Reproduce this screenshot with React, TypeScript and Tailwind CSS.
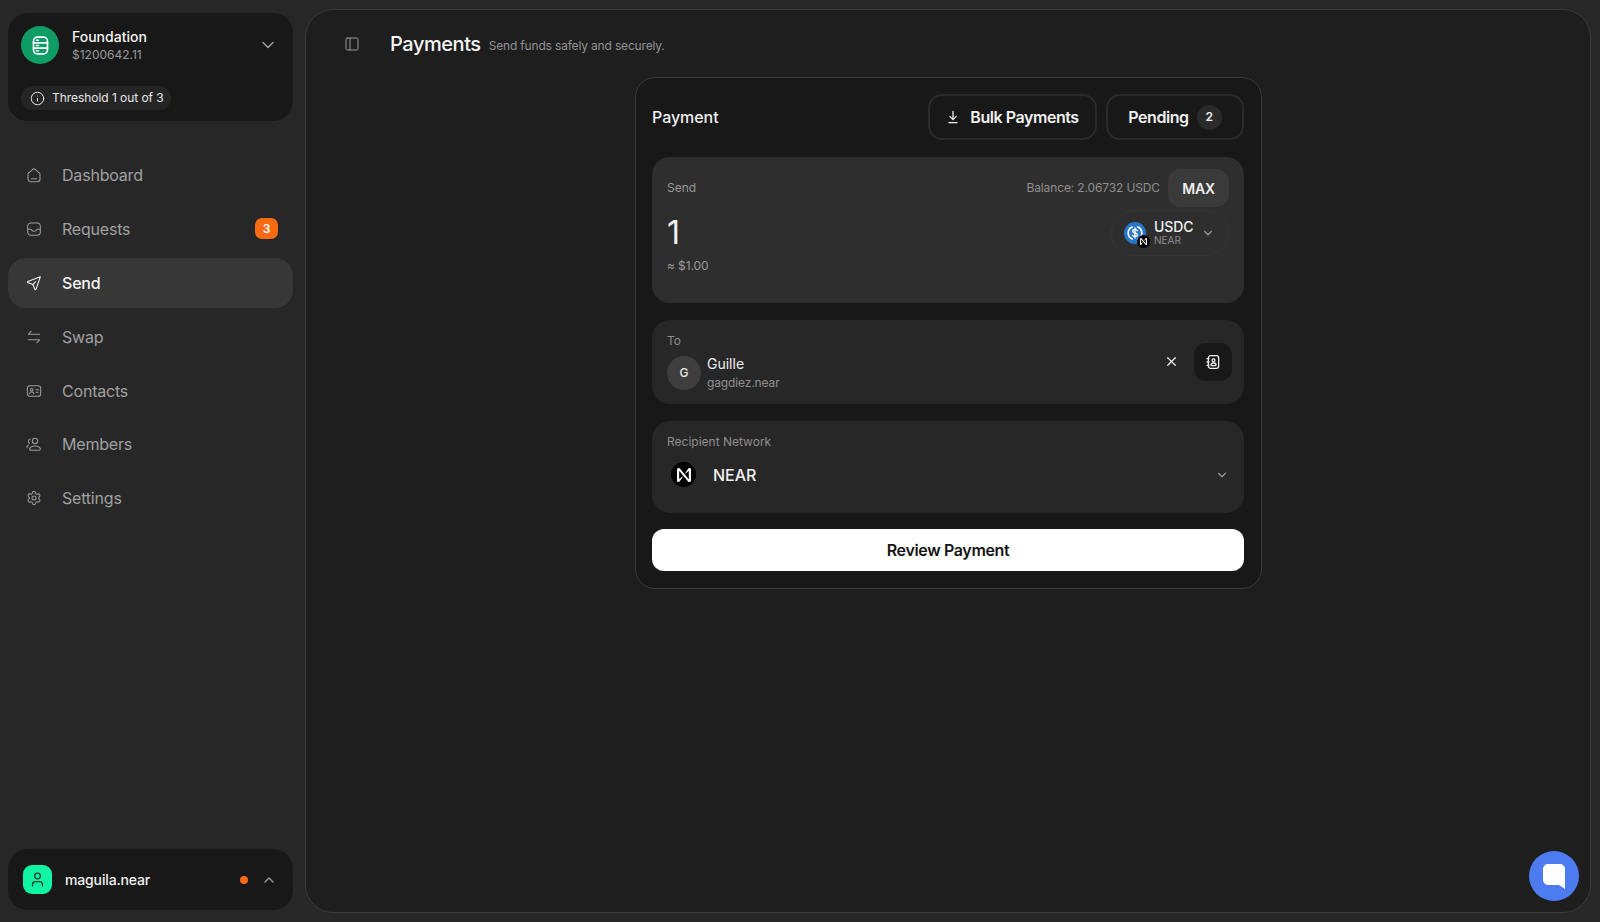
import { ChevronDown, ChevronUp, Info, PanelLeft, Settings, User, X } from "lucide-react";
import type { ReactNode } from "react";

const iconProps = {
  width: 16,
  height: 16,
  viewBox: "0 0 24 24",
  fill: "none",
  stroke: "currentColor",
  strokeWidth: 1.6,
  strokeLinecap: "round" as const,
  strokeLinejoin: "round" as const,
};

function HomeIcon() {
  return (
    <svg {...iconProps}>
      <path d="M3 11.2c0-1 .4-1.9 1.2-2.5l5.6-4.9a3.3 3.3 0 0 1 4.4 0l5.6 4.9c.8.6 1.2 1.5 1.2 2.5V18a4 4 0 0 1-4 4H7a4 4 0 0 1-4-4z" />
      <path d="M8 17.5h8" />
    </svg>
  );
}

function InboxIcon() {
  return (
    <svg {...iconProps}>
      <rect x="2.5" y="3" width="19" height="18.5" rx="5" />
      <path d="M2.5 12.5h4.2c.8 0 1.4.5 1.8 1.2.6 1.1 1.9 1.8 3.5 1.8s2.9-.7 3.5-1.8c.4-.7 1-1.2 1.8-1.2h4.2" />
    </svg>
  );
}

function SendIcon() {
  return (
    <svg {...iconProps}>
      <path d="M21.5 2.8 2.6 9.6c-.7.3-.7 1.2 0 1.5l7.7 3.2 3.2 7.4c.3.7 1.2.6 1.5-.1z" />
      <path d="m10.3 14.3 4.2-4.2" />
    </svg>
  );
}

function SwapIcon() {
  return (
    <svg {...iconProps}>
      <path d="M7.5 3.5 3.5 8h17" />
      <path d="M16.5 20.5l4-4.500h-17" />
    </svg>
  );
}

function ContactsIcon() {
  return (
    <svg {...iconProps}>
      <rect x="2" y="4" width="20" height="16" rx="4" />
      <circle cx="8.5" cy="10.2" r="2" />
      <path d="M5.2 16.2c.4-1.8 1.7-2.7 3.3-2.7s2.9.9 3.3 2.7" />
      <path d="M15 10h4M15 14h3" />
    </svg>
  );
}

function MembersIcon() {
  return (
    <svg {...iconProps}>
      <circle cx="13.5" cy="7.5" r="4" />
      <path d="M7.5 21.500h11.800c1.600 0 2.700-1.500 2-3-1.200-2.400-4.200-3.500-7.800-3.500s-6.600 1.100-7.800 3.500c-.7 1.500.2 3 1.800 3z" />
      <path d="M6.500 4.500a3.300 3.300 0 0 0-1.200 6.200M3.300 13.500C2 14.500 1.300 16 1.500 17.500" />
    </svg>
  );
}

function BookUserIcon() {
  return (
    <svg {...iconProps} strokeWidth={1.9}>
      <rect x="5" y="2.500" width="15.500" height="19" rx="3.500" />
      <circle cx="12.800" cy="9.500" r="2.200" />
      <path d="M9 16.500c0-1.900 1.700-3 3.800-3s3.800 1.100 3.800 3c0 .5-.4.800-.8.800H9.800c-.4 0-.8-.3-.8-.8z" />
      <path d="M3 7h3M3 12h3M3 17h3" />
    </svg>
  );
}

function VaultIcon() {
  return (
    <svg width="21" height="21" viewBox="0 0 24 24" fill="none" stroke="#fff" strokeWidth={1.900} strokeLinecap="round">
      <rect x="4" y="2.500" width="16" height="19" rx="4.500" />
      <path d="M4 9h16M4 15h16M7.500 6h2M7.500 12h2M7.500 18h2" />
    </svg>
  );
}

function DownloadIcon() {
  return (
    <svg width="14" height="14" viewBox="0 0 24 24" fill="none" stroke="currentColor" strokeWidth={2.200} strokeLinecap="round" strokeLinejoin="round">
      <path d="M12 2.500v13.500M6.500 11l5.500 5.500 5.500-5.500M5 21.500h14" />
    </svg>
  );
}

function NearLogo({ size }: { size: number }) {
  return (
    <svg width={size} height={size} viewBox="0 0 24 24" fill="#fff">
      <path d="M19.150 1.220 14.130 8.670a.53.53 0 0 0 .79.7l4.940-4.290a.2.2 0 0 1 .33.15v13.420a.2.2 0 0 1-.35.13L5 .93A2.570 2.570 0 0 0 3.040 0h-.52A2.570 2.570 0 0 0 0 2.570v18.860A2.570 2.570 0 0 0 2.570 24a2.570 2.570 0 0 0 2.190-1.220l5.020-7.450a.53.53 0 0 0-.79-.7l-4.940 4.290a.2.2 0 0 1-.33-.15V5.350a.2.2 0 0 1 .35-.13L19 23.070a2.570 2.570 0 0 0 1.960.93h.52A2.570 2.570 0 0 0 24 21.430V2.570A2.570 2.570 0 0 0 21.430 0a2.570 2.570 0 0 0-2.280 1.220z" />
    </svg>
  );
}

function UsdcLogo() {
  return (
    <div className="relative h-[22px] w-[22px] shrink-0">
      <svg width="22" height="22" viewBox="0 0 24 24" fill="none">
        <circle cx="12" cy="12" r="12" fill="#2775ca" />
        <path d="M9 5.500a7 7 0 0 0 0 13M15 5.500a7 7 0 0 1 0 13" stroke="#fff" strokeWidth="1.800" strokeLinecap="round" />
        <path d="M14.500 9.500c-.4-.9-1.300-1.400-2.500-1.400-1.500 0-2.500.8-2.500 1.900 0 2.600 5.200 1.300 5.200 4 0 1.200-1.100 1.900-2.700 1.900-1.300 0-2.300-.5-2.700-1.500M12 6.500v11" stroke="#fff" strokeWidth="1.500" strokeLinecap="round" />
      </svg>
      <div className="absolute -bottom-[4px] -right-[4px] flex h-[13px] w-[13px] items-center justify-center rounded-full bg-black">
        <NearLogo size={7} />
      </div>
    </div>
  );
}

function NavItem({ icon, label, active, badge }: { icon: ReactNode; label: string; active?: boolean; badge?: string }) {
  return (
    <div
      className={`flex h-[50px] items-center rounded-[18px] pl-[18px] pr-[15px] text-[16px] tracking-[-0.2px] ${
        active ? "bg-[#373737] font-medium text-[#f5f5f5]" : "text-[#a0a0a0]"
      }`}
    >
      <span className={`w-[36px] shrink-0 ${active ? "text-[#f5f5f5]" : "text-[#9a9a9a]"}`}>{icon}</span>
      <span className="flex-1">{label}</span>
      {badge && (
        <span className="flex h-[21px] w-[23px] items-center justify-center rounded-[7px] bg-[#f76b15] text-[12px] font-semibold tracking-normal text-white">
          {badge}
        </span>
      )}
    </div>
  );
}

export default function App() {
  return (
    <div className="relative flex h-[922px] w-full overflow-hidden bg-[#272727] text-white [font-family:Inter,'Liberation_Sans',sans-serif]">
      <aside className="flex w-[305px] shrink-0 flex-col pb-[12px] pl-[8px] pr-[12px] pt-[13px]">
        <div className="h-[108px] rounded-[20px] bg-[#181818] px-[13px] pt-[13px]">
          <div className="flex items-center">
            <div className="flex h-[38px] w-[38px] items-center justify-center rounded-full bg-[#0f9d65]">
              <VaultIcon />
            </div>
            <div className="ml-[13px] flex-1 pt-[2px]">
              <div className="text-[14px] font-medium leading-[18px] text-[#f5f5f5]">Foundation</div>
              <div className="text-[12px] leading-[18px] text-[#9a9a9a]">$1200642.11</div>
            </div>
            <ChevronDown size={20} strokeWidth={1.700} className="mr-[2px] text-[#a0a0a0]" />
          </div>
          <div className="mt-[22px] flex h-[24px] w-[150px] items-center gap-[7px] rounded-full bg-[#252525] pl-[9px] text-[12px] tracking-[-0.05px] text-[#e8e8e8]">
            <Info size={15} strokeWidth={1.600} />
            <span>Threshold 1 out of 3</span>
          </div>
        </div>

        <nav className="mt-[29px] flex flex-col gap-[3.9px]">
          <NavItem icon={<HomeIcon />} label="Dashboard" />
          <NavItem icon={<InboxIcon />} label="Requests" badge="3" />
          <NavItem icon={<SendIcon />} label="Send" active />
          <NavItem icon={<SwapIcon />} label="Swap" />
          <NavItem icon={<ContactsIcon />} label="Contacts" />
          <NavItem icon={<MembersIcon />} label="Members" />
          <NavItem icon={<Settings size={16} strokeWidth={1.600} />} label="Settings" />
        </nav>

        <div className="mt-auto flex h-[61px] items-center rounded-[20px] bg-[#181818] pl-[15px] pr-[16px]">
          <div className="flex h-[29px] w-[29px] items-center justify-center rounded-[9px] bg-[#10f5a5]">
            <User size={17} strokeWidth={1.800} className="text-[#0d3b2a]" />
          </div>
          <span className="ml-[13px] flex-1 text-[14px] font-medium tracking-[-0.15px] text-[#f0f0f0]">maguila.near</span>
          <span className="mr-[13px] h-[8px] w-[8px] rounded-full bg-[#f76b15]" />
          <ChevronUp size={16} className="text-[#9a9a9a]" />
        </div>
      </aside>

      <main className="my-[9px] mr-[9px] flex flex-1 flex-col rounded-[28px] border border-[#3c3c3c] bg-[#1e1e1e] pt-[19px]">
        <header className="flex h-[30px] items-center pl-[38px]">
          <PanelLeft size={16} strokeWidth={1.500} className="text-[#9a9a9a]" />
          <h1 className="ml-[30px] text-[20px] font-medium tracking-[-0.45px] text-[#f5f5f5]">Payments</h1>
          <span className="ml-[8px] mt-[4px] text-[12px] tracking-[-0.17px] text-[#929292]">Send funds safely and securely.</span>
        </header>

        <section className="mx-auto mt-[18px] w-[627px] rounded-[20px] border border-[#3a3a3a] bg-[#181818] px-[16.5px] pb-[17px] pt-[16px]">
          <div className="flex items-center">
            <h2 className="flex-1 text-[16px] font-medium tracking-[-0.05px] text-[#f0f0f0]">Payment</h2>
            <button className="flex h-[46px] w-[169px] items-center justify-center gap-[10px] rounded-[14px] border-2 border-[#2b2b2b] text-[16px] font-semibold tracking-[-0.45px] text-[#f0f0f0]">
              <DownloadIcon />
              Bulk Payments
            </button>
            <button className="ml-[9px] flex h-[46px] w-[138px] items-center justify-center gap-[8px] rounded-[14px] border-2 border-[#2b2b2b] text-[16px] font-semibold tracking-[-0.45px] text-[#f0f0f0]">
              Pending
              <span className="flex h-[25px] w-[25px] items-center justify-center rounded-full bg-[#2a2a2a] text-[12px] tracking-normal">2</span>
            </button>
          </div>

          <div className="mt-[17px] flex h-[146px] flex-col rounded-[18px] bg-[#2e2e2e] pl-[15px] pr-[15px] pt-[12px]">
            <div className="flex items-center">
              <span className="flex-1 text-[12px] text-[#9a9a9a]">Send</span>
              <span className="text-[12px] tracking-[-0.13px] text-[#8f8f8f]">Balance: 2.06732 USDC</span>
              <span className="ml-[8px] flex h-[38px] w-[61px] items-center justify-center rounded-[13px] bg-[#3a3a3a] text-[14px] font-semibold tracking-[-0.2px] text-[#f0f0f0]">
                MAX
              </span>
            </div>
            <div className="mt-[3px] flex items-center">
              <span className="flex-1 text-[32px] leading-[46px] text-[#f0f0f0]">1</span>
              <div className="flex h-[46px] w-[118px] items-center rounded-full border border-[#353535] pl-[12px]">
                <UsdcLogo />
                <div className="ml-[8px] flex-1">
                  <div className="text-[14px] font-medium leading-[14px] tracking-[-0.1px] text-[#f0f0f0]">USDC</div>
                  <div className="text-[10px] leading-[12px] text-[#8f8f8f]">NEAR</div>
                </div>
                <ChevronDown size={14} className="mr-[13px] text-[#9a9a9a]" />
              </div>
            </div>
            <span className="mt-[1px] text-[12px] tracking-[-0.1px] text-[#9a9a9a]">≈ $1.00</span>
          </div>

          <div className="mt-[17px] flex h-[84px] flex-col rounded-[18px] bg-[#272727] pl-[15px] pr-[12px] pt-[13px]">
            <div className="text-[12px] leading-[16px] text-[#8f8f8f]">To</div>
            <div className="flex items-start">
              <div className="mt-[7px] flex h-[34px] w-[34px] items-center justify-center rounded-full bg-[#3e3e3e] text-[12px] font-medium text-[#e8e8e8]">
                G
              </div>
              <div className="ml-[6px] flex-1">
                <div className="mt-[5px] text-[14px] leading-[20px] text-[#f0f0f0]">Guille</div>
                <div className="text-[12px] leading-[17px] tracking-[-0.13px] text-[#8f8f8f]">gagdiez.near</div>
              </div>
              <X size={15} strokeWidth={2} className="mr-[15px] mt-[5px] text-[#f0f0f0]" />
              <div className="-mt-[6px] flex h-[38px] w-[38px] items-center justify-center rounded-[12px] bg-[#181818] text-[#f0f0f0]">
                <BookUserIcon />
              </div>
            </div>
          </div>

          <div className="mt-[17px] flex h-[92px] flex-col rounded-[18px] bg-[#272727] pl-[15px] pr-[15px] pt-[13px]">
            <div className="text-[12px] leading-[16px] text-[#8f8f8f]">Recipient Network</div>
            <div className="mt-[12px] flex items-center">
              <div className="ml-[4px] flex h-[25px] w-[25px] items-center justify-center rounded-full bg-black">
                <NearLogo size={14} />
              </div>
              <span className="ml-[17px] flex-1 text-[16px] font-medium text-[#f0f0f0]">NEAR</span>
              <ChevronDown size={14} className="text-[#9a9a9a]" />
            </div>
          </div>

          <button className="mt-[16px] h-[42px] w-full rounded-[12px] bg-white text-[16px] font-semibold tracking-[-0.35px] text-[#151515]">
            Review Payment
          </button>
        </section>
      </main>

      <div className="absolute bottom-[21px] right-[21px] flex h-[50px] w-[50px] items-center justify-center rounded-full bg-[#4c7cf0]">
        <svg width="22" height="25" viewBox="0 0 22 25" fill="#fff">
          <path d="M5 0h12a5 5 0 0 1 5 5v20l-6-4H5a5 5 0 0 1-5-5V5a5 5 0 0 1 5-5z" />
        </svg>
      </div>
    </div>
  );
}
